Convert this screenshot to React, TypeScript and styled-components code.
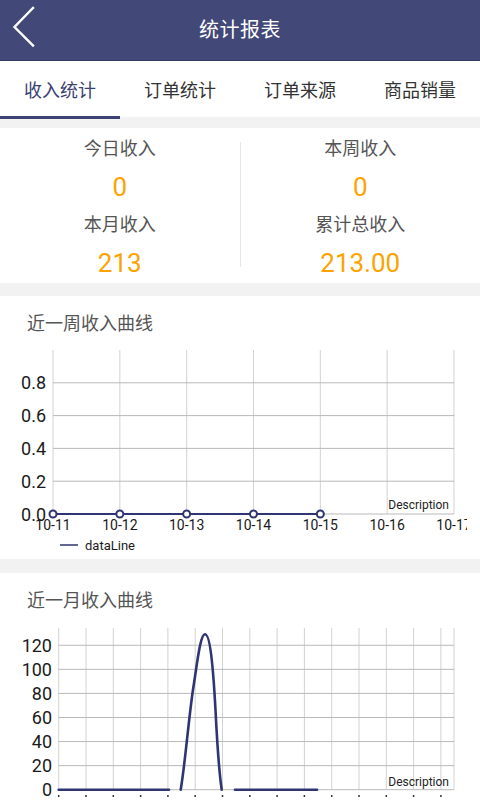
import { FunctionComponent } from 'react'
import styled, { createGlobalStyle } from 'styled-components';

const GlobalStyle = createGlobalStyle`
    html, body {
        margin: 0;
        padding: 0;
        background: #f2f2f2;
        font-family: Roboto, "Noto Sans CJK SC", sans-serif;
    }
`;

const NAVY = '#2f3473';
const ORANGE = '#fca300';

const Page = styled(`div`)(() => ({
    width: '480px',
    display: 'flex',
    flexDirection: 'column',
    background: '#f2f2f2',
}));

const Header = styled.header`
    height: 60px;
    border-bottom: 1px solid #343a68;
    background: #424877;
    display: flex;
    align-items: center;
    justify-content: center;
    position: relative;
`;

const BackButton = styled.button`
    position: absolute;
    left: 0;
    top: 0;
    width: 48px;
    height: 60px;
    border: none;
    padding: 0;
    background: transparent;
    display: block;
`;

const Title = styled.h1`
    margin: 0 0 4px;
    font-size: 20px;
    font-weight: normal;
    color: #fff;
    letter-spacing: 0.5px;
`;

const Tabs = styled.nav`
    height: 56px;
    background: #fff;
    display: grid;
    grid-template-columns: repeat(4, 1fr);
`;

const Tab = styled.div<{ $active?: boolean }>`
    position: relative;
    display: flex;
    align-items: center;
    justify-content: center;
    font-size: 18px;
    color: ${p => (p.$active ? '#3b4072' : '#333')};

    &:after {
        content: "";
        display: ${p => (p.$active ? 'block' : 'none')};
        position: absolute;
        left: 0;
        right: 0;
        bottom: -2px;
        height: 3px;
        background: #3d4274;
    }
`;

const Stats = styled.section`
    margin-top: 11px;
    padding-top: 3px;
    background: #fff;
    display: grid;
    grid-template-columns: 1fr 1px 1fr;
`;

const StatColumn = styled.div`
    display: flex;
    flex-direction: column;
    align-items: center;
`;

const Divider = styled.div`
    align-self: start;
    margin-top: 11px;
    height: 125px;
    background: #e6e6e6;
`;

const StatLabel = styled.div`
    height: 36px;
    line-height: 36px;
    font-size: 18px;
    color: #555;
`;

const StatValue = styled.div`
    height: 40px;
    line-height: 40px;
    font-size: 26px;
    color: ${ORANGE};
`;

const Card = styled.section<{ $gap: number }>`
    margin-top: ${p => p.$gap}px;
    background: #fff;
    display: flex;
    flex-direction: column;
`;

const CardTitle = styled.h2`
    margin: 0;
    padding: 14px 0 0 27px;
    line-height: 28px;
    font-size: 18px;
    font-weight: normal;
    color: #555;
`;

const ChartSvg = styled.svg`
    display: block;
    font-family: Roboto, sans-serif;
`;

const StatBlock: FunctionComponent<{ label: string; value: string }> = ({ label, value }) => (
    <>
        <StatLabel>{label}</StatLabel>
        <StatValue>{value}</StatValue>
    </>
);

// weekly chart: plot 53..454 x, 12..176 y (svg coords)
const WeekChart = () => {
    const xs = [0, 1, 2, 3, 4, 5, 6].map(i => 53 + i * 66.83);
    const labels = ['10-11', '10-12', '10-13', '10-14', '10-15', '10-16', '10-17'];
    const ys = [0, 0.2, 0.4, 0.6, 0.8].map(v => 176 - v * 164);
    return (
        <ChartSvg width="467" height="221" viewBox="0 0 467 221">
            {xs.map(x => (
                <line key={x} x1={x} x2={x} y1={12} y2={176} stroke="#d2d2d2" strokeWidth="1" />
            ))}
            {ys.map(y => (
                <line key={y} x1={53} x2={454} y1={y} y2={y} stroke="#b9b9b9" strokeWidth="1" />
            ))}
            {['0.0', '0.2', '0.4', '0.6', '0.8'].map((t, i) => (
                <text key={t} x={46} y={ys[i] + 6.5} textAnchor="end" fontSize="18" fill="#1a1a1a">{t}</text>
            ))}
            <text x={449} y={171} textAnchor="end" fontSize="12" fill="#222">Description</text>
            <line x1={53} x2={320.3} y1={176} y2={176} stroke={NAVY} strokeWidth="2" />
            {xs.slice(0, 5).map(x => (
                <circle key={x} cx={x} cy={176} r="3.5" fill="#fff" stroke={NAVY} strokeWidth="2" />
            ))}
            {labels.map((l, i) => (
                <text key={l} x={xs[i]} y={192} textAnchor="middle" fontSize="14" fill="#1a1a1a">{l}</text>
            ))}
            <line x1={60} x2={78} y1={207} y2={207} stroke={NAVY} strokeWidth="1.5" />
            <text x={85} y={212} fontSize="13" fill="#1a1a1a">dataLine</text>
        </ChartSvg>
    );
};

// monthly chart: plot 58.7..454 x, 13..174.7 y (svg coords)
const MonthChart = () => {
    const base = 174.7;
    const step = 24.07;
    const xs = Array.from({ length: 15 }, (_, i) => 58.7 + i * 27.3);
    const ticks = [0, 20, 40, 60, 80, 100, 120];
    return (
        <ChartSvg width="467" height="190" viewBox="0 0 467 190">
            {[...xs, 454].map(x => (
                <line key={x} x1={x} x2={x} y1={13} y2={base} stroke="#d2d2d2" strokeWidth="1" />
            ))}
            {ticks.map(v => (
                <line key={v} x1={58.7} x2={454} y1={base - (v / 20) * step} y2={base - (v / 20) * step} stroke="#b9b9b9" strokeWidth="1" />
            ))}
            {ticks.map(v => (
                <text key={v} x={52} y={base - (v / 20) * step + 6.5} textAnchor="end" fontSize="18" fill="#1a1a1a">{v}</text>
            ))}
            <text x={449} y={171} textAnchor="end" fontSize="12" fill="#222">Description</text>
            <g fill="none" stroke={NAVY} strokeWidth="2.6" strokeLinecap="round">
                <line x1={58.7} x2={169} y1={base} y2={base} />
                <path d="M180.7 174.7 C 185 150, 189 100, 193.3 72.7 C 197 50, 200 19.3, 205 19.3 C 210 19.3, 213 50, 215.5 95 C 217.5 135, 219.5 160, 221.7 174.7" />
                <line x1={235} x2={317} y1={base} y2={base} />
            </g>
            {xs.map(x => (
                <rect key={x} x={x - 0.75} y={180} width="1.5" height="2" fill="#333" />
            ))}
        </ChartSvg>
    );
};

const App = () => (
    <Page>
        <GlobalStyle />
        <Header>
            <BackButton aria-label="back">
                <svg width="48" height="60" viewBox="0 0 48 60">
                    <polyline points="33,8 14.5,27 33,45.5" fill="none" stroke="#fff" strokeWidth="2.4" strokeLinecap="square" />
                </svg>
            </BackButton>
            <Title>统计报表</Title>
        </Header>
        <Tabs>
            <Tab $active>收入统计</Tab>
            <Tab>订单统计</Tab>
            <Tab>订单来源</Tab>
            <Tab>商品销量</Tab>
        </Tabs>
        <Stats>
            <StatColumn>
                <StatBlock label="今日收入" value="0" />
                <StatBlock label="本月收入" value="213" />
            </StatColumn>
            <Divider />
            <StatColumn>
                <StatBlock label="本周收入" value="0" />
                <StatBlock label="累计总收入" value="213.00" />
            </StatColumn>
        </Stats>
        <Card $gap={13}>
            <CardTitle>近一周收入曲线</CardTitle>
            <WeekChart />
        </Card>
        <Card $gap={14}>
            <CardTitle>近一月收入曲线</CardTitle>
            <MonthChart />
        </Card>
    </Page>
);

export default App;
